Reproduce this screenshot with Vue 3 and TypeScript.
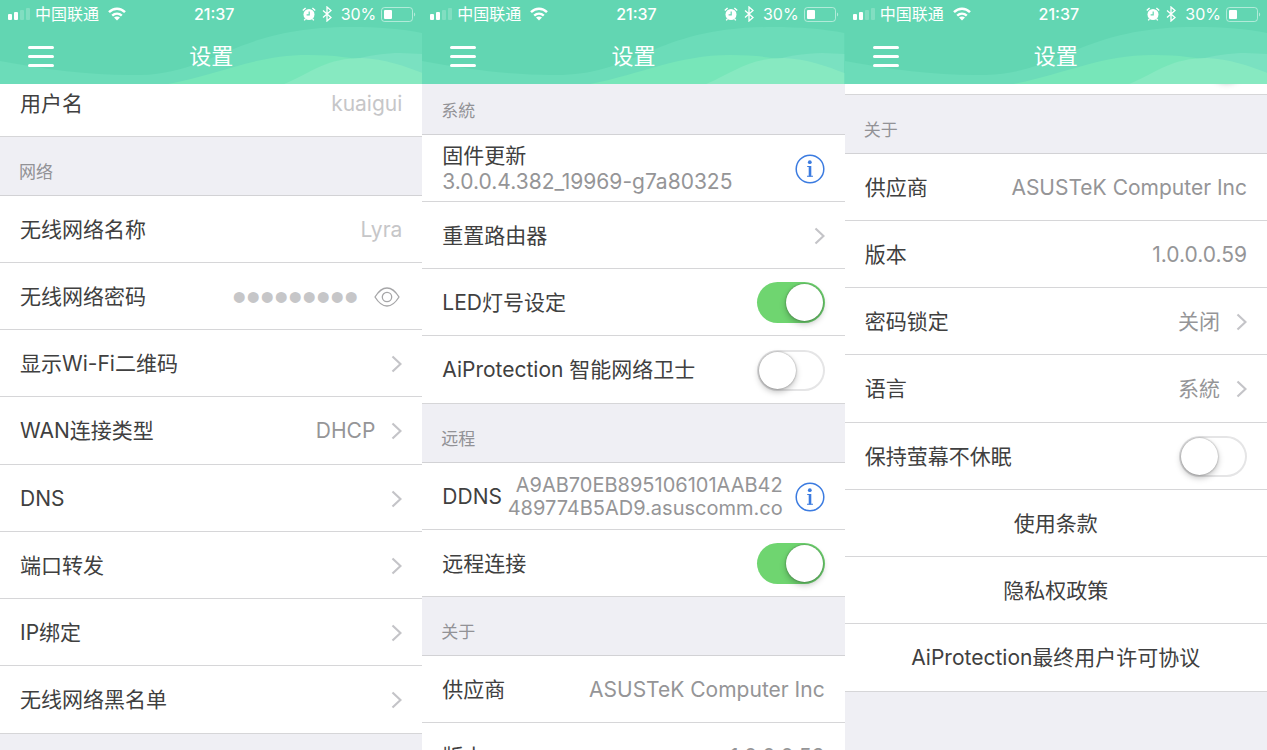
<script setup lang="ts">
import { reactive } from 'vue'

type Row = {
  kind: 'input' | 'password' | 'link' | 'info' | 'stack' | 'switch' | 'text' | 'center'
  label: string
  value?: string
  lines?: string[]
  on?: boolean
  bare?: boolean
}
type Group = { title?: string; rows: Row[] }
type Panel = { id: string; groups: Group[] }

const panels = reactive<Panel[]>([
  {
    id: 'network',
    groups: [
      { rows: [{ kind: 'input', label: '用户名', value: 'kuaigui' }] },
      {
        title: '网络',
        rows: [
          { kind: 'input', label: '无线网络名称', value: 'Lyra' },
          { kind: 'password', label: '无线网络密码', value: '123456789' },
          { kind: 'link', label: '显示Wi-Fi二维码' },
          { kind: 'link', label: 'WAN连接类型', value: 'DHCP' },
          { kind: 'link', label: 'DNS' },
          { kind: 'link', label: '端口转发' },
          { kind: 'link', label: 'IP绑定' },
          { kind: 'link', label: '无线网络黑名单' },
        ],
      },
    ],
  },
  {
    id: 'system',
    groups: [
      {
        title: '系統',
        rows: [
          { kind: 'stack', label: '固件更新', value: '3.0.0.4.382_19969-g7a80325' },
          { kind: 'link', label: '重置路由器' },
          { kind: 'switch', label: 'LED灯号设定', on: true },
          { kind: 'switch', label: 'AiProtection 智能网络卫士', on: false },
        ],
      },
      {
        title: '远程',
        rows: [
          { kind: 'info', label: 'DDNS', lines: ['A9AB70EB895106101AAB42', '489774B5AD9.asuscomm.co'] },
          { kind: 'switch', label: '远程连接', on: true },
        ],
      },
      {
        title: '关于',
        rows: [
          { kind: 'text', label: '供应商', value: 'ASUSTeK Computer Inc' },
          { kind: 'text', label: '版本', value: '1.0.0.0.59' },
        ],
      },
    ],
  },
  {
    id: 'about',
    groups: [
      { rows: [{ kind: 'switch', label: '远程连接', on: true, bare: true }] },
      {
        title: '关于',
        rows: [
          { kind: 'text', label: '供应商', value: 'ASUSTeK Computer Inc' },
          { kind: 'text', label: '版本', value: '1.0.0.0.59' },
          { kind: 'link', label: '密码锁定', value: '关闭' },
          { kind: 'link', label: '语言', value: '系統' },
          { kind: 'switch', label: '保持萤幕不休眠', on: false },
          { kind: 'center', label: '使用条款' },
          { kind: 'center', label: '隐私权政策' },
          { kind: 'center', label: 'AiProtection最终用户许可协议' },
        ],
      },
    ],
  },
])
</script>

<template>
  <main class="screens">
    <section v-for="p in panels" :key="p.id" class="panel">
      <header class="top">
        <svg class="waves" viewBox="0 0 422 84" preserveAspectRatio="none" aria-hidden="true">
          <path fill="#6cdcb9" d="M0 61C50 70 95 76 140 75C215 73 235 27 350 27C378 27 402 29 422 33V84H0Z" />
          <path fill="#7ae1c1" d="M300 84C330 62 372 53 400 53L422 54V84Z" />
          <path fill="#77e6b9" d="M168 84C220 74 255 55 308 55C335 55 352 58 366 61L340 84Z" />
          <path fill="#87e9c1" d="M284 84C312 72 326 58 362 58C384 59 404 66 422 73V84Z" />
        </svg>
        <div class="status">
          <div class="side">
            <svg width="22" height="12" viewBox="0 0 22 12" fill="#fff" aria-hidden="true">
              <rect x="0" y="6" width="4" height="6" rx="1" />
              <rect x="6" y="4" width="4" height="8" rx="1" />
              <rect x="12" y="2" width="4" height="10" rx="1" opacity=".2" />
              <rect x="18" y="0" width="4" height="12" rx="1" opacity=".2" />
            </svg>
            <span class="carrier">中国联通</span>
            <svg width="18" height="14" viewBox="0 0 18 14" fill="none" stroke="#fff" stroke-width="2.4" aria-hidden="true">
              <path d="M1 5.2C5.5 .6 12.5 .6 17 5.2" />
              <path d="M4.2 8.6C7 6 11 6 13.8 8.6" />
              <path d="M9 13.5L6 10.6C7.6 9.2 10.4 9.2 12 10.6Z" fill="#fff" stroke="none" />
            </svg>
          </div>
          <time class="clock">21:37</time>
          <div class="side right">
            <svg width="14" height="14" viewBox="0 0 14 14" aria-hidden="true">
              <circle cx="7" cy="7.5" r="5.5" fill="#fff" />
              <path d="M.8 3.6L3.6 1M13.2 3.6L10.4 1M3.4 12L2.2 13.4M10.6 12L11.8 13.4" stroke="#fff" stroke-width="1.4" />
              <path d="M7.2 4.4V7.8H4.6" fill="none" stroke="#62d6b2" stroke-width="1.2" />
            </svg>
            <svg class="bluetooth" width="10" height="16" viewBox="0 0 10 16" fill="none" stroke="#fff" stroke-width="1.3" aria-hidden="true">
              <path d="M1 4.5L9 11.5L5 15V1L9 4.5L1 11.5" />
            </svg>
            <span>30%</span>
            <svg width="35" height="15" viewBox="0 0 35 15" aria-hidden="true">
              <rect x=".5" y=".5" width="31" height="14" rx="3" fill="none" stroke="#fff" stroke-opacity=".5" />
              <rect x="3" y="3" width="8" height="9" rx="1" fill="#fff" />
              <path d="M33 5.5C34.6 6 34.6 9 33 9.5Z" fill="#fff" opacity=".5" />
            </svg>
          </div>
        </div>
        <div class="nav">
          <button class="menu" type="button" aria-label="菜单"><i></i><i></i><i></i></button>
          <h1>设置</h1>
        </div>
      </header>

      <div class="body">
        <div :class="p.id">
          <template v-for="(g, gi) in p.groups" :key="gi">
            <h2 v-if="g.title">{{ g.title }}</h2>
            <ul>
              <li v-for="(r, ri) in g.rows" :key="ri">
                <label v-if="r.kind === 'input'" class="row">
                  <span>{{ r.label }}</span>
                  <input v-model="r.value" class="field" type="text" />
                </label>

                <div v-else-if="r.kind === 'password'" class="row">
                  <label :for="p.id + '-key'">{{ r.label }}</label>
                  <input :id="p.id + '-key'" v-model="r.value" class="field secret" type="password" autocomplete="off" />
                  <button class="eye" type="button" aria-label="显示密码">
                    <svg width="26" height="20" viewBox="0 0 26 20" fill="none" stroke="#a6a6a8" stroke-width="1.3">
                      <path d="M1 10C5 3.5 9 1 13 1S21 3.5 25 10C21 16.5 17 19 13 19S5 16.5 1 10Z" />
                      <circle cx="13" cy="10" r="4.7" />
                    </svg>
                  </button>
                </div>

                <a v-else-if="r.kind === 'link'" class="row" href="#">
                  <span>{{ r.label }}</span>
                  <span v-if="r.value" class="value">{{ r.value }}</span>
                  <svg class="chevron" width="11" height="18" viewBox="0 0 11 18" fill="none" stroke="#c4c4c8" stroke-width="2.2">
                    <path d="M1.5 1.5L9.5 9L1.5 16.5" />
                  </svg>
                </a>

                <div v-else-if="r.kind === 'stack' || r.kind === 'info'" class="row">
                  <div v-if="r.kind === 'stack'" class="stack">
                    <span>{{ r.label }}</span>
                    <span class="version">{{ r.value }}</span>
                  </div>
                  <template v-else>
                    <span>{{ r.label }}</span>
                    <span class="host"><span v-for="l in r.lines" :key="l">{{ l }}</span></span>
                  </template>
                  <button class="info" type="button" :aria-label="r.label + ' 详情'">
                    <svg width="30" height="30" viewBox="0 0 30 30">
                      <circle cx="15" cy="15" r="13.8" fill="none" stroke="#3b7be0" stroke-width="1.5" />
                      <circle cx="14.8" cy="8.2" r="1.9" fill="#3b7be0" />
                      <path d="M12.2 12.5H15V21.8M12 22.2H18" fill="none" stroke="#3b7be0" stroke-width="1.1" />
                      <path d="M15 12V22.5" stroke="#3b7be0" stroke-width="2.6" />
                    </svg>
                  </button>
                </div>

                <label v-else-if="r.kind === 'switch'" class="row">
                  <span v-if="!r.bare">{{ r.label }}</span>
                  <input v-model="r.on" class="switch" type="checkbox" role="switch" :aria-label="r.label" />
                </label>

                <div v-else-if="r.kind === 'text'" class="row">
                  <span>{{ r.label }}</span>
                  <span class="value">{{ r.value }}</span>
                </div>

                <a v-else class="row center" href="#">{{ r.label }}</a>
              </li>
            </ul>
          </template>
        </div>
      </div>
    </section>
  </main>
</template>

<style>
body {
  background: #efeff4;
}
</style>

<style scoped>
* {
  box-sizing: border-box;
}
.screens {
  display: grid;
  grid-template-columns: repeat(3, minmax(0, 1fr));
  grid-template-rows: minmax(0, 1fr);
  height: 100vh;
  overflow: hidden;
  font-family: Inter, "Noto Sans CJK SC", sans-serif;
  font-size: 21px;
  line-height: 26px;
  color: #404040;
}
.panel {
  display: flex;
  flex-direction: column;
  min-height: 0;
}
.top {
  position: relative;
  flex: none;
  height: 84px;
  color: #fff;
  background: #62d6b2;
}
.waves {
  position: absolute;
  inset: 0;
  width: 100%;
  height: 100%;
}
.status,
.nav {
  position: relative;
  display: grid;
  grid-template-columns: 1fr auto 1fr;
  align-items: center;
}
.status {
  height: 28px;
  padding: 0 6px 0 8px;
  font-size: 16px;
  line-height: 20px;
}
.side {
  display: flex;
  align-items: center;
  gap: 5px;
}
.right {
  justify-content: flex-end;
}
.carrier {
  margin-right: 4px;
}
.bluetooth {
  margin: 0 4px 0 1px;
}
.clock {
  padding-left: 4px;
  font-weight: 500;
}
.nav {
  height: 56px;
  padding: 0 28px;
}
.menu {
  display: flex;
  flex-direction: column;
  gap: 6px;
  width: 26px;
  padding: 0;
  border: 0;
  background: none;
}
.menu i {
  height: 3px;
  border-radius: 2px;
  background: #fff;
}
h1 {
  margin: 0;
  font-size: 22px;
  line-height: 28px;
  font-weight: 400;
}
.body {
  flex: 1;
  min-height: 0;
  overflow: hidden;
}
.network {
  margin-top: -14px;
}
.system {
  margin-top: -8px;
}
.about {
  margin-top: -56px;
}
h2 {
  display: flex;
  align-items: center;
  height: 59px;
  margin: 0;
  padding: 12px 19px 0;
  border-bottom: 1px solid #d2d2d5;
  font-size: 17px;
  line-height: 24px;
  font-weight: 400;
  color: #929296;
  background: #efeff4;
}
ul {
  margin: 0;
  padding: 0;
  list-style: none;
}
li {
  height: 67px;
  border-bottom: 1px solid #d6d6d8;
  background: #fff;
}
li:nth-child(4n) {
  height: 68px;
}
.row {
  display: flex;
  align-items: center;
  height: 100%;
  padding: 1px 20px 0;
  color: inherit;
  text-decoration: none;
  white-space: nowrap;
}
.center {
  justify-content: center;
}
.value {
  margin-left: auto;
  color: #959597;
}
.chevron {
  flex: none;
  margin-left: auto;
}
.value + .chevron {
  margin-left: 16px;
}
.field {
  flex: 1;
  min-width: 0;
  padding: 0;
  border: 0;
  outline: 0;
  background: none;
  font: inherit;
  color: #c6c6c8;
  text-align: right;
}
.secret {
  font-family: "Liberation Sans", sans-serif;
  font-size: 40px;
  line-height: 48px;
}
.eye,
.info {
  display: flex;
  flex: none;
  padding: 0;
  border: 0;
  background: none;
}
.eye {
  margin: 0 2px 0 16px;
}
.stack {
  display: flex;
  flex: 1;
  flex-direction: column;
}
.version,
.host {
  color: #959597;
}
.host {
  display: flex;
  flex: 1;
  flex-direction: column;
  padding-right: 12px;
  font-size: 20px;
  line-height: 23px;
  text-align: right;
}
.switch {
  appearance: none;
  flex: none;
  width: 68px;
  height: 41px;
  margin: 0 0 0 auto;
  padding: 2px;
  border-radius: 21px;
  background: #fff;
  box-shadow: inset 0 0 0 2px #e5e5e6;
}
.switch::before {
  content: "";
  display: block;
  width: 37px;
  height: 37px;
  border-radius: 50%;
  background: #fff;
  box-shadow: 0 3px 6px rgba(0, 0, 0, 0.25), 0 0 2px rgba(0, 0, 0, 0.4);
}
.switch:checked {
  background: #6fd570;
  box-shadow: none;
}
.switch:checked::before {
  margin-left: 27px;
}
</style>
